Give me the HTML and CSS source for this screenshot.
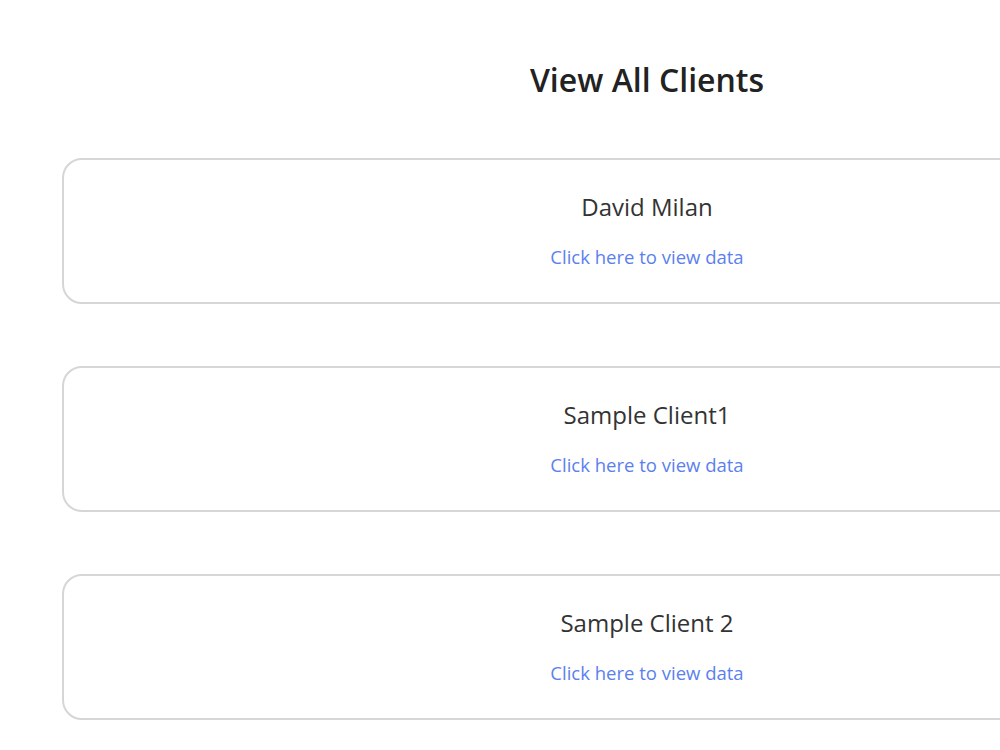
FILE: index.html
```html
<!DOCTYPE html>
<html lang="en">
<head>
    <meta charset="UTF-8">
    <meta name="viewport" content="width=device-width, initial-scale=1.0">
    <title>View All Clients</title>
    <link rel="stylesheet" href="styles.css">
</head>
<body>
    <div class="clients">
        <h1 class="page-title">View All Clients</h1>

        <div class="client-card">
            <div class="client-name">David Milan</div>
            <a class="client-link" href="#">Click here to view data</a>
        </div>

        <div class="client-card">
            <div class="client-name">Sample Client1</div>
            <a class="client-link" href="#">Click here to view data</a>
        </div>

        <div class="client-card">
            <div class="client-name">Sample Client 2</div>
            <a class="client-link" href="#">Click here to view data</a>
        </div>
    </div>
</body>
</html>
```

FILE: styles.css
```css
body {
    margin: 0;
    background-color: #ffffff;
    font-family: 'Open Sans', 'Noto Sans', Arial, sans-serif;
    color: #333333;
    overflow: hidden;
}
.clients {
    width: 1170px;
    margin-left: 62px;
    padding-top: 58px;
}
.page-title {
    margin: 0 0 56px;
    text-align: center;
    font-size: 32px;
    font-weight: 600;
    line-height: 44px;
    color: #222222;
}
.client-card {
    box-sizing: border-box;
    height: 146px;
    margin-bottom: 62px;
    padding-top: 31px;
    border: 2px solid #d6d6d6;
    border-radius: 20px;
    text-align: center;
}
.client-name {
    font-size: 24px;
    line-height: 32px;
    color: #333333;
}
.client-link {
    display: inline-block;
    margin-top: 22px;
    font-size: 18.5px;
    line-height: 24px;
    color: #5b7ff0;
    text-decoration: none;
}
```
